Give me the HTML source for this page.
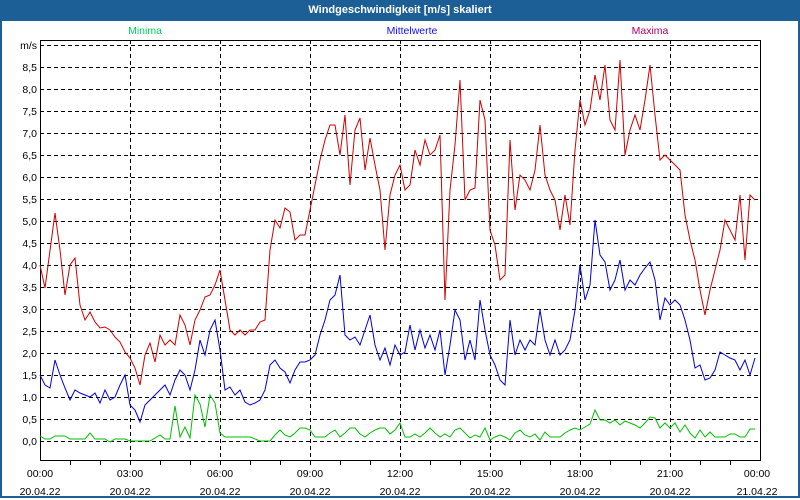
<!DOCTYPE html>
<html><head><meta charset="utf-8"><style>
html,body{margin:0;padding:0;width:800px;height:500px;overflow:hidden;background:#fff}
.wrap{position:absolute;left:0;top:0;width:796px;height:496px;border:2px solid #1c5f96;border-top:none}
.title{position:absolute;left:0;top:0;width:800px;height:21px;background:#1c5f96;color:#fff;font:bold 11px "Liberation Sans",sans-serif;text-align:center;line-height:20px}
svg{position:absolute;left:0;top:0}
text{font-family:"Liberation Sans",sans-serif;font-size:10.5px}
</style></head><body>
<div class="wrap"></div>
<div class="title">Windgeschwindigkeit [m/s] skaliert</div>
<svg width="800" height="500">
<text x="145" y="34" fill="#00d060" text-anchor="middle">Minima</text>
<text x="412" y="34" fill="#1010ff" text-anchor="middle">Mittelwerte</text>
<text x="650" y="34" fill="#b0006a" text-anchor="middle">Maxima</text>
<g stroke="#000" stroke-dasharray="4,3" stroke-width="1" fill="none">
<path d="M40 45.5H760M40 67.5H760M40 89.5H760M40 111.5H760M40 133.5H760M40 155.5H760M40 177.5H760M40 199.5H760M40 221.5H760M40 243.5H760M40 265.5H760M40 287.5H760M40 309.5H760M40 331.5H760M40 353.5H760M40 375.5H760M40 397.5H760M40 419.5H760M40 441.5H760"/>
<path d="M130.5 40V460M220.5 40V460M310.5 40V460M400.5 40V460M490.5 40V460M580.5 40V460M670.5 40V460"/>
</g>
<g stroke="#000" fill="none">
<path d="M40.5 40V460.5H760.5V40.5H40"/>
<path d="M70.5 460v5M100.5 460v5M130.5 460v5M160.5 460v5M190.5 460v5M220.5 460v5M250.5 460v5M280.5 460v5M310.5 460v5M340.5 460v5M370.5 460v5M400.5 460v5M430.5 460v5M460.5 460v5M490.5 460v5M520.5 460v5M550.5 460v5M580.5 460v5M610.5 460v5M640.5 460v5M670.5 460v5M700.5 460v5M730.5 460v5"/>
</g>
<g fill="#000" text-anchor="end">
<text x="37" y="49">m/s</text><text x="37" y="71">8,5</text><text x="37" y="93">8,0</text><text x="37" y="115">7,5</text><text x="37" y="137">7,0</text><text x="37" y="159">6,5</text><text x="37" y="181">6,0</text><text x="37" y="203">5,5</text><text x="37" y="225">5,0</text><text x="37" y="247">4,5</text><text x="37" y="269">4,0</text><text x="37" y="291">3,5</text><text x="37" y="313">3,0</text><text x="37" y="335">2,5</text><text x="37" y="357">2,0</text><text x="37" y="379">1,5</text><text x="37" y="401">1,0</text><text x="37" y="423">0,5</text><text x="37" y="445">0,0</text>
</g>
<g fill="#000" text-anchor="middle">
<text x="40" y="477">00:00</text><text x="40" y="495">20.04.22</text>
<text x="130" y="477">03:00</text><text x="130" y="495">20.04.22</text>
<text x="220" y="477">06:00</text><text x="220" y="495">20.04.22</text>
<text x="310" y="477">09:00</text><text x="310" y="495">20.04.22</text>
<text x="400" y="477">12:00</text><text x="400" y="495">20.04.22</text>
<text x="490" y="477">15:00</text><text x="490" y="495">20.04.22</text>
<text x="580" y="477">18:00</text><text x="580" y="495">20.04.22</text>
<text x="670" y="477">21:00</text><text x="670" y="495">20.04.22</text>
<text x="757" y="477">00:00</text><text x="757" y="495">21.04.22</text>
</g>
<polyline fill="none" stroke="#d00000" points="40,265 45,288 55,213 60,250 65,295 70,265 75,258 80,305 85,320 90,312 95,322 100,328 105,327 110,330 115,337 120,342 125,352 130,358 135,368 140,385 145,355 150,343 155,362 160,335 165,345 170,340 175,345 180,315 185,325 190,345 195,320 200,310 205,297 210,295 215,285 220,270 225,300 230,330 235,335 240,330 245,335 250,330 255,330 260,322 265,320 270,250 275,220 280,228 285,208 290,212 295,240 300,235 305,235 310,210 315,185 320,160 325,140 330,125 335,125 340,155 345,115 350,185 355,130 360,118 365,170 370,138 375,165 380,190 385,250 390,195 395,175 400,165 405,190 410,185 415,150 420,165 425,140 430,155 435,150 440,135 445,300 450,190 455,145 460,80 465,200 470,190 475,188 480,100 485,120 490,230 495,245 500,280 505,275 510,140 515,210 520,175 525,180 530,190 535,170 540,125 545,175 550,190 555,200 560,230 565,195 570,225 575,150 580,100 585,125 590,110 595,75 600,100 605,65 610,120 615,130 620,60 625,155 630,130 635,115 640,130 645,100 650,65 655,115 660,160 665,155 670,160 675,165 680,170 685,215 690,240 695,260 700,290 705,315 710,290 715,270 720,250 725,220 730,230 735,240 740,195 745,260 750,195 755,200"/>
<polyline fill="none" stroke="#0000e0" points="40,375 45,385 50,388 55,360 60,375 65,388 70,400 75,390 80,393 85,395 90,397 95,393 100,403 105,390 110,400 115,397 120,385 125,375 130,405 135,410 140,422 145,405 150,400 155,395 160,390 165,385 170,395 175,380 180,370 185,375 190,390 195,370 200,340 205,355 210,330 215,320 220,350 225,390 230,387 235,395 240,390 245,402 250,405 255,403 260,400 265,390 270,365 275,360 280,368 285,372 290,383 295,370 300,362 305,362 310,360 315,355 320,335 325,320 330,300 335,295 340,275 345,335 350,340 355,337 360,345 365,330 370,315 375,345 380,360 385,348 390,365 395,345 400,355 405,352 410,325 415,350 420,330 425,348 430,335 435,350 440,330 445,375 450,345 455,310 460,320 465,360 470,340 475,360 480,300 485,330 490,355 495,365 500,380 505,385 510,320 515,355 520,340 525,350 530,340 535,345 540,310 545,340 550,355 555,340 560,355 565,350 570,340 575,310 580,265 585,300 590,285 595,220 600,255 605,262 610,290 615,280 620,260 625,290 630,280 635,285 640,275 645,268 650,262 655,280 660,320 665,298 670,305 675,300 680,305 685,320 690,340 695,368 700,365 705,380 710,378 715,370 720,352 725,355 730,358 735,360 740,370 745,360 750,375 755,358"/>
<polyline fill="none" stroke="#00c000" points="40,436 45,439 50,439 55,436 60,436 65,436 70,439 75,439 80,439 85,439 90,433 95,439 100,439 105,439 110,442 115,439 120,439 125,439 130,441 140,441 150,441 155,438 160,435 165,439 170,439 175,406 180,437 185,427 190,438 195,395 200,404 205,427 210,395 215,403 220,433 225,437 240,437 250,437 260,441 270,441 275,435 280,430 285,435 290,437 295,433 300,428 305,428 310,430 315,437 320,437 325,437 330,433 335,430 340,437 345,433 350,428 355,428 360,434 365,437 370,433 375,430 380,428 385,428 390,434 395,430 400,423 405,437 410,437 415,434 420,437 425,433 430,428 435,433 440,437 445,434 450,437 455,430 460,428 465,433 470,438 475,435 480,437 485,428 490,440 495,437 500,435 505,437 510,440 515,433 520,430 525,435 530,437 535,434 540,440 545,432 550,437 555,437 560,437 565,433 570,430 575,428 580,430 585,427 590,424 595,410 600,420 605,420 610,423 615,420 620,425 625,421 630,423 635,425 640,428 645,423 650,417 655,418 660,428 665,423 670,428 675,423 680,432 685,425 690,433 695,438 700,430 705,437 710,432 715,437 720,437 725,437 730,434 735,434 740,437 745,437 750,429 755,429"/>
</svg>
</body></html>
